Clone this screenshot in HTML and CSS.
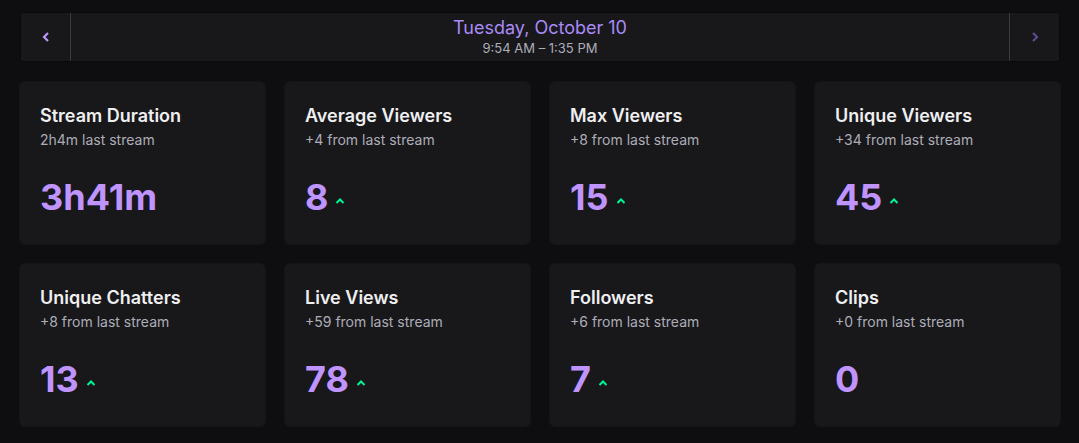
FILE: index.html
```html
<!DOCTYPE html>
<html>
<head>
<meta charset="utf-8">
<link rel="stylesheet" href="styles.css">
</head>
<body>
<div class="page">
  <div class="datebar">
    <button class="nav">
      <svg width="8" height="10" viewBox="0 0 8 10"><path d="M6 1 L2 5 L6 9" fill="none" stroke="currentColor" stroke-width="2.2"/></svg>
    </button>
    <div class="date">
      <div class="date-title">Tuesday, October 10</div>
      <div class="date-sub">9:54 AM – 1:35 PM</div>
    </div>
    <button class="nav nav-right disabled">
      <svg width="8" height="10" viewBox="0 0 8 10"><path d="M2 1 L6 5 L2 9" fill="none" stroke="currentColor" stroke-width="2.2"/></svg>
    </button>
  </div>
  <div class="grid">
    <div class="card"><div class="title">Stream Duration</div><div class="sub">2h4m last stream</div><div class="value"><span class="num">3h41m</span></div></div>
    <div class="card"><div class="title">Average Viewers</div><div class="sub">+4 from last stream</div><div class="value"><span class="num">8</span><svg class="up" viewBox="0 0 10 6"><path d="M1.5 5 L5 1.5 L8.5 5" fill="none" stroke="currentColor" stroke-width="2"/></svg></div></div>
    <div class="card"><div class="title">Max Viewers</div><div class="sub">+8 from last stream</div><div class="value"><span class="num">15</span><svg class="up" viewBox="0 0 10 6"><path d="M1.5 5 L5 1.5 L8.5 5" fill="none" stroke="currentColor" stroke-width="2"/></svg></div></div>
    <div class="card"><div class="title">Unique Viewers</div><div class="sub">+34 from last stream</div><div class="value"><span class="num">45</span><svg class="up" viewBox="0 0 10 6"><path d="M1.5 5 L5 1.5 L8.5 5" fill="none" stroke="currentColor" stroke-width="2"/></svg></div></div>
    <div class="card"><div class="title">Unique Chatters</div><div class="sub">+8 from last stream</div><div class="value"><span class="num">13</span><svg class="up" viewBox="0 0 10 6"><path d="M1.5 5 L5 1.5 L8.5 5" fill="none" stroke="currentColor" stroke-width="2"/></svg></div></div>
    <div class="card"><div class="title">Live Views</div><div class="sub">+59 from last stream</div><div class="value"><span class="num">78</span><svg class="up" viewBox="0 0 10 6"><path d="M1.5 5 L5 1.5 L8.5 5" fill="none" stroke="currentColor" stroke-width="2"/></svg></div></div>
    <div class="card"><div class="title">Followers</div><div class="sub">+6 from last stream</div><div class="value"><span class="num">7</span><svg class="up" viewBox="0 0 10 6"><path d="M1.5 5 L5 1.5 L8.5 5" fill="none" stroke="currentColor" stroke-width="2"/></svg></div></div>
    <div class="card"><div class="title">Clips</div><div class="sub">+0 from last stream</div><div class="value"><span class="num">0</span></div></div>
  </div>
</div>
</body>
</html>
```
FILE: styles.css
```css
html, body {
  margin: 0;
  padding: 0;
  background: #0e0e10;
  font-family: Inter, "Noto Sans", sans-serif;
}
.page {
  padding: 12px 19px 18px 20px;
  display: flex;
  flex-direction: column;
  gap: 20px;
}
.datebar {
  display: flex;
  height: 50px;
  box-sizing: border-box;
  background: #18181b;
  border: 1px solid #0a0a0c;
  border-radius: 2px;
}
.nav {
  width: 50px;
  flex: none;
  background: transparent;
  border: none;
  border-right: 1px solid #3a3a3f;
  color: #bf94ff;
  display: flex;
  align-items: center;
  justify-content: center;
  padding: 0;
}
.nav-right {
  border-right: none;
  border-left: 1px solid #3a3a3f;
}
.nav.disabled { color: #5f4b8f; }
.date {
  flex: 1;
  display: flex;
  flex-direction: column;
  align-items: center;
  justify-content: center;
}
.date-title {
  color: #a98af7;
  font-size: 18px;
  line-height: 22px;
  margin-top: -2px;
}
.date-sub {
  color: #adadb8;
  font-size: 13px;
  line-height: 16px;
  margin-top: 1px;
}
.grid {
  display: grid;
  grid-template-columns: repeat(4, 1fr);
  gap: 20px;
}
.card {
  background: #18181b;
  border-radius: 5px;
  height: 162px;
  box-sizing: border-box;
  padding: 22px 20px 0 20px;
  box-shadow: 0 0 0 1px #151517;
}
.title {
  color: #efeff1;
  font-size: 18px;
  font-weight: 600;
  line-height: 24px;
}
.sub {
  color: #adadb8;
  font-size: 14px;
  line-height: 20px;
  margin-top: 2px;
}
.value {
  display: flex;
  align-items: center;
  margin-top: 25px;
  height: 44px;
}
.num {
  color: #bf94ff;
  font-size: 36px;
  font-weight: 700;
  line-height: 44px;
}
.up {
  width: 10px;
  height: 6px;
  color: #00f593;
  margin-left: 7px;
  margin-top: 7px;
}
```
